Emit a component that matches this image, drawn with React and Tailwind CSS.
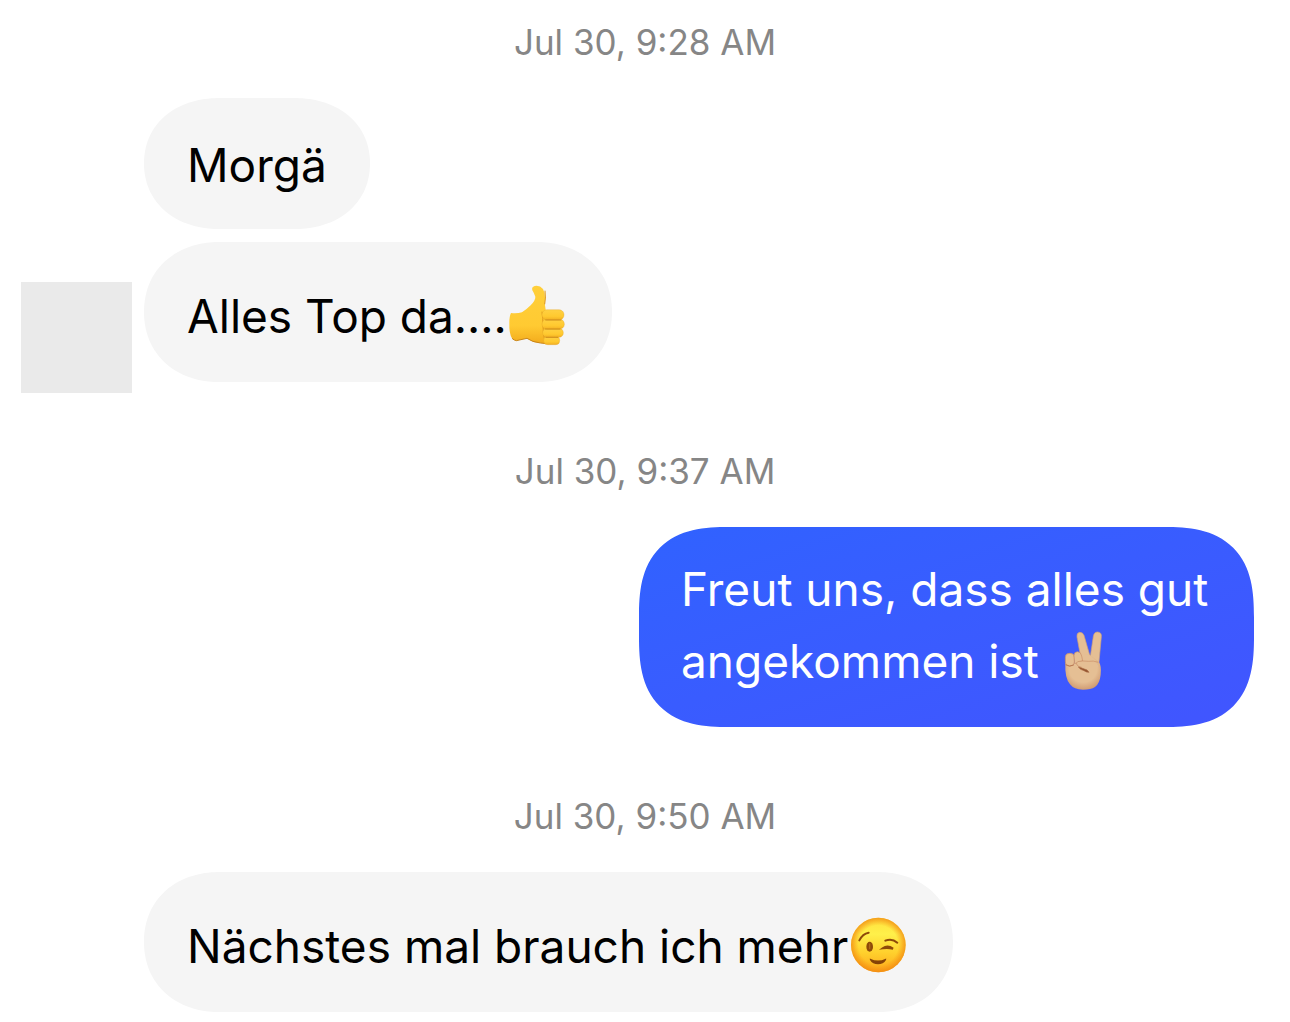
import clsx from "clsx";

const ThumbsUp = () => (
  <svg
    role="img"
    aria-label="thumbs up"
    viewBox="45 45 186 186"
    className="inline-block size-[62px] align-[-14px]"
  >
    <defs>
      <linearGradient id="thumb" x1="0" y1="0" x2="0" y2="1">
        <stop offset="0" stopColor="#ffcf3a" />
        <stop offset="0.7" stopColor="#ffca32" />
        <stop offset="1" stopColor="#f3ac1d" />
      </linearGradient>
      <linearGradient id="finger" x1="0" y1="0" x2="0" y2="1">
        <stop offset="0" stopColor="#ffd143" />
        <stop offset="0.65" stopColor="#ffc92f" />
        <stop offset="1" stopColor="#f2ae22" />
      </linearGradient>
    </defs>
    <path
      d="M57 129Q75 131 90 127Q103 119 116 106Q131 90 130 80Q126 69 121 61Q118 51 128 48Q143 45 153 57Q159 67 159 84Q157 102 161 119L165 218Q143 221 125 216Q113 212 105 205L73 212Q66 211 60 205Q51 190 52 158Q52 139 57 129Z"
      fill="url(#thumb)"
    />
    <path
      d="M60 205Q66 211 73 212L105 205Q120 216 145 219L162 221"
      fill="none"
      stroke="#c98518"
      strokeWidth="3"
    />
    <path
      d="M159 62Q162 86 158 103M150 125Q153 146 153 163Q153 191 158 211"
      fill="none"
      stroke="#dc961a"
      strokeWidth="3"
    />
    <g fill="url(#finger)" stroke="#e0a024" strokeWidth="1">
      <rect x="155" y="199" width="48" height="25" rx="12" />
      <rect x="152" y="175" width="62" height="27" rx="13" />
      <rect x="150" y="147" width="67" height="31" rx="15" />
      <rect x="150" y="119" width="66" height="31" rx="15" />
    </g>
    <path
      d="M161 150H207M160 177H204M162 202H197"
      stroke="#bd7813"
      strokeWidth="2"
      strokeLinecap="round"
    />
  </svg>
);

const Victory = () => (
  <svg
    role="img"
    aria-label="victory hand"
    viewBox="21 57 186 186"
    className="inline-block size-[62px] align-[-14px]"
  >
    <defs>
      <radialGradient id="palm" cx="0.5" cy="0.4" r="0.65">
        <stop offset="0.6" stopColor="#e5bf94" />
        <stop offset="1" stopColor="#cc956d" />
      </radialGradient>
    </defs>
    <path
      d="M134 150L145 76Q147 63 158 63Q171 64 169 78L161 163Z"
      fill="#e5bf94"
      stroke="#cfa078"
      strokeWidth="2"
    />
    <path
      d="M108 143L96 78Q94 66 104 64Q113 63 117 73L134 132L140 163Z"
      fill="#e5bf94"
      stroke="#cfa078"
      strokeWidth="2"
    />
    <path
      d="M61 157Q72 167 87 159L99 130L134 131L160 151Q170 163 167 191Q164 218 150 228Q138 236 114 236Q87 236 75 220Q59 202 61 157Z"
      fill="url(#palm)"
    />
    <g fill="#e5bf94" stroke="#c88e67" strokeWidth="2">
      <rect x="61" y="127" width="27" height="38" rx="12" />
      <path d="M87 134Q87 122 98 122Q108 123 110 135L113 150L98 155L89 158Z" />
    </g>
    <path
      d="M62 161Q73 169 86 162"
      fill="none"
      stroke="#b87a53"
      strokeWidth="3"
    />
    <path
      d="M95 154Q102 149 133 151Q153 154 160 165Q153 178 133 181Q127 174 98 167Q92 161 95 154Z"
      fill="#e5bf94"
    />
    <path
      d="M160 154Q144 148 130 151Q108 148 98 152Q92 155 96 162Q99 166 110 169"
      fill="none"
      stroke="#c88e67"
      strokeWidth="2"
    />
    <path
      d="M100 168Q111 171 118 174Q128 175 132 184Q123 184 117 179Q106 177 100 168Z"
      fill="#93542f"
      stroke="#a96b45"
      strokeWidth="2"
    />
  </svg>
);

const Wink = () => (
  <svg
    role="img"
    aria-label="winking face"
    viewBox="39 45 186 186"
    className="inline-block size-[62px] align-[-14px]"
  >
    <defs>
      <linearGradient id="face" x1="0" y1="0" x2="0" y2="1">
        <stop offset="0" stopColor="#ffdf3c" />
        <stop offset="0.3" stopColor="#fff04a" />
        <stop offset="0.65" stopColor="#ffcf2c" />
        <stop offset="1" stopColor="#fda81c" />
      </linearGradient>
      <radialGradient id="rim">
        <stop offset="0.72" stopColor="#f68a10" stopOpacity="0" />
        <stop offset="1" stopColor="#f0850f" stopOpacity="0.75" />
      </radialGradient>
    </defs>
    <circle cx="130" cy="135" r="82" fill="url(#face)" />
    <circle cx="130" cy="135" r="82" fill="url(#rim)" />
    <g fill="none" stroke="#8e4a09" strokeWidth="6" strokeLinecap="round">
      <path d="M73 121Q83 101 101 98" />
      <path d="M151 122Q171 114 187 128" />
      <path d="M143 145Q158 134 174 146Q159 143 143 145Z" />
    </g>
    <ellipse cx="104" cy="140" rx="10" ry="15" fill="#8e4a09" />
    <path
      d="M104 132V146"
      stroke="#af6a18"
      strokeWidth="4"
      strokeLinecap="round"
    />
    <path
      d="M106 176Q129 187 152 176Q155 175 153 180Q145 193 129 193Q113 193 105 180Q103 175 106 176Z"
      fill="#854207"
    />
  </svg>
);

const DateLabel = ({ className, children }) => (
  <time
    className={clsx(
      "block pb-[30px] text-center text-[35px] leading-[52px] text-[#868686]",
      className
    )}
  >
    {children}
  </time>
);

const Bubble = ({ className, children }) => (
  <p
    className={clsx(
      "rounded-[76px/50%] bg-[#f5f5f5] px-[43px] text-[46px] leading-[72px] text-black [corner-shape:superellipse(1.1)]",
      className
    )}
  >
    {children}
  </p>
);

const App = () => {
  return (
    <main className="bg-white pb-[10px] font-['Inter',sans-serif]">
      <DateLabel className="pt-4">Jul 30, 9:28 AM</DateLabel>
      <section className="flex items-end gap-3 pl-[21px]">
        <div className="-mb-[11px] size-[111px] shrink-0 bg-[#eaeaea]" />
        <div className="flex flex-col items-start gap-[13px]">
          <Bubble className="pt-[31px] pb-[28px]">Morgä</Bubble>
          <Bubble className="pt-[38px] pb-[30px]">
            Alles Top da....
            <ThumbsUp />
          </Bubble>
        </div>
      </section>

      <DateLabel className="pt-[63px]">Jul 30, 9:37 AM</DateLabel>
      <section className="flex justify-end pr-9">
        <p className="max-w-[615px] rounded-[90px] bg-linear-to-br from-[#3062ff] to-[#4155ff] px-[42px] pt-[26px] pb-[30px] text-[46px] leading-[72px] text-white [corner-shape:superellipse(1.4)]">
          Freut uns, dass alles gut angekommen ist <Victory />
        </p>
      </section>

      <DateLabel className="pt-[63px]">Jul 30, 9:50 AM</DateLabel>
      <section className="flex pl-36">
        <Bubble className="pt-[38px] pb-[30px]">
          Nächstes mal brauch ich mehr
          <Wink />
        </Bubble>
      </section>
    </main>
  );
};

export default App;
